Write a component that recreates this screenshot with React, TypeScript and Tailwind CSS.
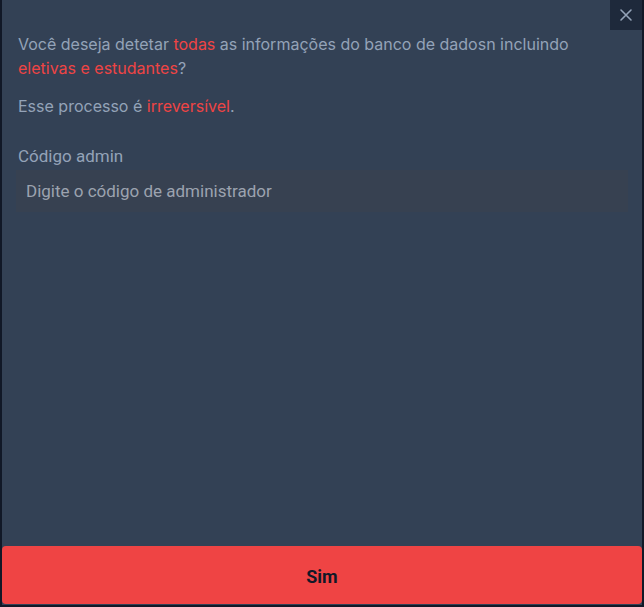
import React from "react";

export default function App() {
  return (
    <div className="w-[644px] h-[607px] bg-[#0f172a] overflow-hidden">
      <div className="relative w-full h-full bg-[#334155] border-x-2 border-b-2 border-[#111827] flex flex-col">
        <button className="absolute right-0 top-0 w-[32px] h-[30px] bg-[#1e293b] flex items-center justify-center">
          <svg width="14" height="14" viewBox="0 0 14 14" fill="none" stroke="#94a3b8" strokeWidth="1.6" strokeLinecap="round">
            <path d="M2 2 L12 12 M12 2 L2 12" />
          </svg>
        </button>
        <div className="pl-[16px] pr-[12px] pt-[32px] flex-1 flex flex-col" style={{ fontFamily: "Inter, sans-serif" }}>
          <p className="text-[16px] leading-[24px] text-[#94a3b8]">
            Você deseja detetar <span className="text-[#ef4444]">todas</span> as informações do banco de dadosn incluindo{" "}
            <span className="text-[#ef4444]">eletivas e estudantes</span>?
          </p>
          <p className="mt-[14px] text-[16px] leading-[24px] text-[#94a3b8]">
            Esse processo é <span className="text-[#ef4444]">irreversível</span>.
          </p>
          <label className="mt-[26px] text-[17px] leading-[24px] text-[#94a3b8]" style={{ fontFamily: "Roboto, sans-serif" }}>
            Código admin
          </label>
          <input
            className="mt-[2px] w-[612px] h-[42px] -ml-[2px] bg-[#374151] px-[10px] text-[17px] text-[#9ca3af] placeholder:text-[#9ca3af] outline-none"
            style={{ fontFamily: "Roboto, sans-serif" }}
            placeholder="Digite o código de administrador"
          />
        </div>
        <button
          className="h-[58px] mb-[1px] w-full bg-[#ef4444] rounded-[4px] text-[#111827] text-[18px] font-bold pt-[3px]"
          style={{ fontFamily: "Roboto, sans-serif" }}
        >
          Sim
        </button>
      </div>
    </div>
  );
}
